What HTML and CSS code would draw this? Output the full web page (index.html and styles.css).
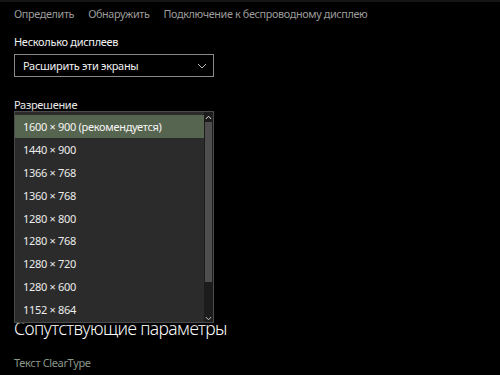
FILE: index.html
```html
<!DOCTYPE html>
<html lang="ru">
<head>
<meta charset="utf-8">
<link rel="stylesheet" href="styles.css">
</head>
<body>
<div class="topline"></div>
<main class="page">
  <nav class="links">
    <a class="link">Определить</a>
    <a class="link">Обнаружить</a>
    <a class="link">Подключение к беспроводному дисплею</a>
  </nav>

  <div class="label label-multi">Несколько дисплеев</div>
  <div class="select">
    <span>Расширить эти экраны</span>
    <svg class="chev" width="10" height="6" viewBox="0 0 10 6"><path d="M1 1 L5 5 L9 1" fill="none" stroke="#b8b8b8" stroke-width="1"/></svg>
  </div>

  <section class="res">
    <div class="label label-res">Разрешение</div>
    <div class="select hidden-select"></div>

    <div class="dropdown">
      <ul class="list">
        <li class="item selected">1600 × 900 (рекомендуется)</li>
        <li class="item">1440 × 900</li>
        <li class="item">1366 × 768</li>
        <li class="item">1360 × 768</li>
        <li class="item">1280 × 800</li>
        <li class="item">1280 × 768</li>
        <li class="item">1280 × 720</li>
        <li class="item">1280 × 600</li>
        <li class="item">1152 × 864</li>
      </ul>
      <div class="scrollbar">
        <div class="arrow">
          <svg width="7" height="5" viewBox="0 0 7 5"><path d="M0.8 4 L3.5 1.2 L6.2 4" fill="none" stroke="#e0e0e0" stroke-width="1"/></svg>
        </div>
        <div class="thumb"></div>
        <div class="track"></div>
        <div class="arrow arrow-down">
          <svg width="7" height="5" viewBox="0 0 7 5"><path d="M0.8 1 L3.5 3.8 L6.2 1" fill="none" stroke="#c0c0c0" stroke-width="1"/></svg>
        </div>
      </div>
    </div>
  </section>

  <h2 class="heading">Сопутствующие параметры</h2>
  <a class="link cleartype">Текст ClearType</a>
</main>
</body>
</html>
```

FILE: styles.css
```css
html, body {
  margin: 0;
  padding: 0;
  background: #000;
}
body {
  font-family: "Noto Sans", "Open Sans", sans-serif;
  color: #fff;
  width: 500px;
  height: 375px;
  overflow: hidden;
}
.topline {
  height: 2px;
  background: #151515;
}
.page {
  padding: 0 14px;
}
.links {
  display: flex;
  gap: 14px;
  height: 22px;
  align-items: center;
}
.link {
  font-size: 10.8px;
  letter-spacing: -0.35px;
  color: #9b9b9b;
}
.label {
  font-size: 11px;
  letter-spacing: -0.3px;
  color: #f2f2f2;
  line-height: 16px;
}
.label-multi {
  margin-top: 10px;
}
.select {
  box-sizing: border-box;
  width: 200px;
  height: 23px;
  margin-top: 4px;
  border: 1.5px solid #8a8a8a;
  display: flex;
  align-items: center;
  justify-content: space-between;
  padding: 0 6px 0 8px;
  font-size: 11px;
  letter-spacing: -0.3px;
  color: #f0f0f0;
}
.res {
  position: relative;
  margin-top: 20px;
  height: 219px;
}
.hidden-select {
  margin-top: 1px;
}
.dropdown {
  position: absolute;
  left: 0;
  top: 14px;
  width: 200px;
  height: 212px;
  box-sizing: border-box;
  border: 1px solid #4a4a4a;
  background: #2b2b2b;
  display: flex;
  box-shadow: 0 0 6px rgba(0,0,0,0.6);
  z-index: 2;
}
.list {
  list-style: none;
  margin: 0;
  padding: 3px 0 0;
  flex: 1;
}
.item {
  height: 22.9px;
  display: flex;
  align-items: center;
  padding-left: 8px;
  font-size: 11px;
  letter-spacing: -0.3px;
  color: #ececec;
}
.selected {
  background: #56654f;
  color: #f6f6f6;
}
.scrollbar {
  width: 9px;
  display: flex;
  flex-direction: column;
  background: #1c1c1c;
}
.arrow {
  height: 10px;
  display: flex;
  align-items: center;
  justify-content: center;
  background: #1c1c1c;
}
.arrow-down {
  height: 8px;
  align-items: flex-end;
  padding-bottom: 1px;
}
.thumb {
  height: 160px;
  background: #4e4e4e;
  margin: 0 1px;
}
.track {
  flex: 1;
}
.heading {
  margin: 0;
  font-weight: 300;
  font-size: 17.5px;
  letter-spacing: -0.6px;
  line-height: 24px;
  color: #fff;
}
.cleartype {
  display: block;
  margin-top: 15px;
  line-height: 16px;
  font-size: 11px;
  color: #8a9888;
}
```
